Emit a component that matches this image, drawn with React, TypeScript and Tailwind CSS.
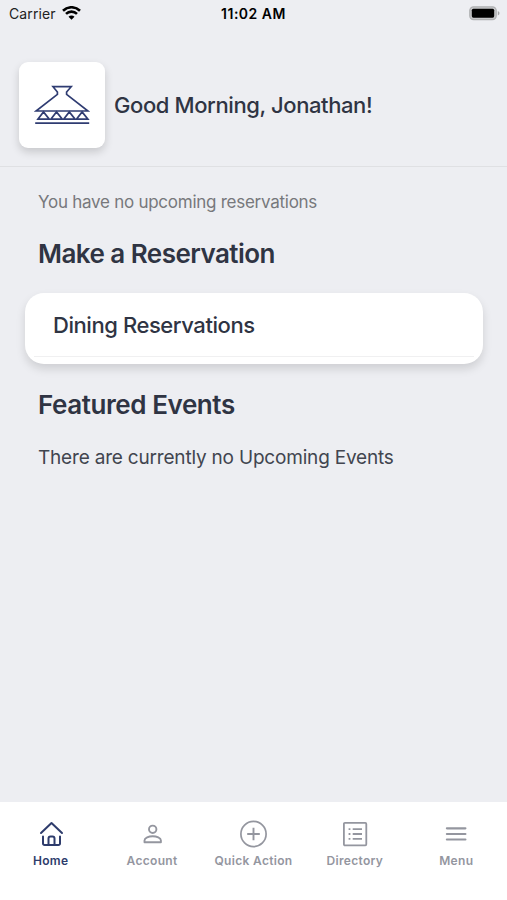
import type { ReactNode } from "react";

const tabs: { label: string; icon: ReactNode; active?: boolean }[] = [
  { label: "Home", icon: <HomeIcon />, active: true },
  { label: "Account", icon: <AccountIcon /> },
  { label: "Quick Action", icon: <PlusIcon /> },
  { label: "Directory", icon: <DirectoryIcon /> },
  { label: "Menu", icon: <MenuIcon /> },
];

function HomeIcon() {
  return (
    <svg width="28" height="28" viewBox="0 0 28 28" fill="none" stroke="currentColor" strokeWidth="2" strokeLinecap="round" strokeLinejoin="round">
      <path d="M4 13 14.5 3 25 13" />
      <path d="M6 16.500v7a1.500 1.500 0 0 0 1.500 1.500h14a1.500 1.500 0 0 0 1.500-1.500v-7" />
      <path d="M11.500 24.500v-6a2 2 0 0 1 2-2h2a2 2 0 0 1 2 2v6" />
    </svg>
  );
}

function AccountIcon() {
  return (
    <svg width="28" height="28" viewBox="0 0 28 28" fill="none" stroke="currentColor" strokeWidth="1.9">
      <circle cx="14.7" cy="9.3" r="3.7" />
      <path d="M6.5 22.2v-1.700c0-2.6 4.3-4.2 8.2-4.2s8.2 1.6 8.2 4.2v1.700Z" strokeLinejoin="round" />
    </svg>
  );
}

function PlusIcon() {
  return (
    <svg width="28" height="28" viewBox="0 0 28 28" fill="none" stroke="currentColor" strokeWidth="1.7">
      <circle cx="14.5" cy="14" r="12.6" />
      <path d="M14.5 7.7v12.6M8.2 14h12.6" strokeWidth="1.9" />
    </svg>
  );
}

function DirectoryIcon() {
  return (
    <svg width="28" height="28" viewBox="0 0 28 28" fill="none" stroke="currentColor" strokeWidth="1.8">
      <rect x="2.9" y="2.9" width="22.4" height="22.4" rx="1" />
      <path d="M11.7 9.2h9.3M11.7 14h9.3M11.7 18.9h9.3" />
      <path d="M7.6 9.2h1.8M7.6 14h1.8M7.6 18.9h1.8" />
    </svg>
  );
}

function MenuIcon() {
  return (
    <svg width="28" height="28" viewBox="0 0 28 28" fill="none" stroke="currentColor" strokeWidth="2.2" strokeLinecap="round">
      <path d="M4.9 8.3h18.500M4.900 14h18.500M4.900 19.500h18.500" />
    </svg>
  );
}

function Logo() {
  return (
    <svg width="56" height="40" viewBox="0 0 56 40" fill="none" stroke="#2f3c72" strokeWidth="1.7">
      <path d="M19 1.700h18.200l-4.600 5.300v2.400l21.400 16.600H2L23.400 9.400V7Z" />
      <path d="m4 34.100 5.500-7.200 5.800 7.200ZM17 34.100l5.500-7.200 5.800 7.200ZM29.800 34.100l5.500-7.200 5.800 7.200ZM42.600 34.100l5.500-7.200 5.800 7.200Z" />
      <path d="M1.200 38.200h54" />
    </svg>
  );
}

function StatusBar() {
  return (
    <div className="grid h-7 grid-cols-3 items-center pr-[7px] pb-0.5 pl-[9px] text-black">
      <div className="flex items-center gap-1.5">
        <span className="text-[14px] tracking-[0.1px] text-[#222]">Carrier</span>
        <svg width="19" height="14" viewBox="0 0 19 14" fill="none" stroke="#000" strokeWidth="2.6">
          <path d="M1 4.700a12.200 12.200 0 0 1 17 0" />
          <path d="M4 7.900a7.900 7.900 0 0 1 11 0" />
          <path d="M9.500 13.800 6.500 10.700a4.200 4.200 0 0 1 6 0Z" fill="#000" stroke="none" />
        </svg>
      </div>
      <span className="-ml-0.5 text-center text-[14px] font-semibold tracking-[0.5px]">11:02 AM</span>
      <svg className="justify-self-end" width="31" height="15" viewBox="0 0 31 15">
        <rect x="0.8" y="0.8" width="26.4" height="12.8" rx="3.8" fill="#c6c7c9" stroke="#b0b1b3" strokeWidth="1.3" />
        <rect x="2.8" y="2.7" width="22.4" height="9" rx="1.6" fill="#000" />
        <path d="M28.8 5c2.2.8 2.2 3.7 0 4.5Z" fill="#a3a4a6" />
      </svg>
    </div>
  );
}

export default function App() {
  return (
    <div className="flex h-[900px] w-[507px] flex-col overflow-hidden bg-[#edeef2] font-['Inter',sans-serif] text-[#2f3443]">
      <StatusBar />

      <header className="flex h-[139px] items-center gap-[9px] border-b border-[#dfe0e3] pl-[19px]">
        <div className="mt-4 flex size-[86px] items-center justify-center rounded-[9px] bg-white shadow-[0_4px_8px_rgba(0,0,0,0.16)]">
          <Logo />
        </div>
        <h1 className="mt-4 text-[22px] font-[550] tracking-[-0.4px]">Good Morning, Jonathan!</h1>
      </header>

      <main className="flex-1 px-[25px] pt-[23px]">
        <p className="pl-[13px] text-[17px] leading-6 tracking-[-0.26px] text-[#77787c]">You have no upcoming reservations</p>
        <h2 className="mt-6 pl-[13px] text-[26px] leading-8 font-semibold tracking-[-0.54px]">Make a Reservation</h2>

        <div className="mt-[23px] h-[71px] w-[458px] rounded-[19px] bg-white px-[9px] shadow-[0_5px_10px_rgba(0,0,0,0.13)]">
          <div className="flex h-16 items-center border-b border-[#f0f0f1] pt-px pl-[19px] text-[22px] font-[550] tracking-[-0.43px]">
            Dining Reservations
          </div>
        </div>

        <h2 className="mt-[25px] pl-[13px] text-[26px] leading-8 font-semibold tracking-[-0.42px]">Featured Events</h2>
        <p className="mt-[23px] pl-[13px] text-[19px] leading-7 tracking-[-0.19px] text-[#41454f]">There are currently no Upcoming Events</p>
      </main>

      <nav className="grid h-[98px] grid-cols-5 bg-white pt-[18px]">
        {tabs.map((tab) => (
          <div
            key={tab.label}
            className={`flex flex-col items-center gap-1 ${tab.active ? "text-[#2e3c6c]" : "text-[#94969f]"}`}
          >
            {tab.icon}
            <span className="text-[12px] leading-[18px] font-semibold tracking-[0.32px] whitespace-nowrap">{tab.label}</span>
          </div>
        ))}
      </nav>
    </div>
  );
}
